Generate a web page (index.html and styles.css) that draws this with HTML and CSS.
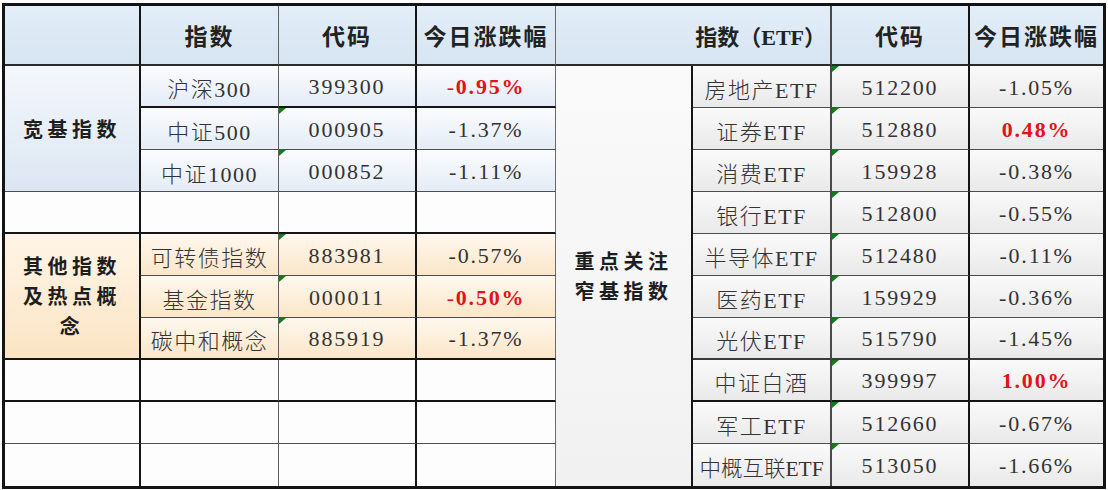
FILE: index.html
```html
<!DOCTYPE html>
<html lang="zh-CN">
<head>
<meta charset="utf-8">
<title>指数涨跌幅</title>
<link rel="stylesheet" href="styles.css">
</head>
<body>
<div class="sheet">
  <!-- header -->
  <div class="cell head k1 bh"></div>
  <div class="cell head k2 bh">指数</div>
  <div class="cell head k3 bh">代码</div>
  <div class="cell head k4 bh">今日涨跌幅</div>
  <div class="cell head k6 bh span2 right">指数（ETF）</div>
  <div class="cell head k7 bh">代码</div>
  <div class="cell head k8 bh">今日涨跌幅</div>

  <!-- row 1 -->
  <div class="cell label blue-l k1 bn rows3">宽基指数</div>
  <div class="cell blue k2 bt">沪深300</div>
  <div class="cell blue k3 bt num">399300</div>
  <div class="cell blue k4 bt num"><span class="red">-</span><b class="red">0.95%</b></div>
  <div class="cell label gray-l k5 b0 rows10">重点关注<br>窄基指数</div>
  <div class="cell gray k6 bn">房地产ETF</div>
  <div class="cell gray k7 bn num flag">512200</div>
  <div class="cell gray k8 bn num">-1.05%</div>

  <!-- row 2 -->
  <div class="cell blue k2 bn">中证500</div>
  <div class="cell blue k3 bn num flag">000905</div>
  <div class="cell blue k4 bn num">-1.37%</div>
  <div class="cell gray k6 bn">证券ETF</div>
  <div class="cell gray k7 bn num flag">512880</div>
  <div class="cell gray k8 bn num"><b class="red">0.48%</b></div>

  <!-- row 3 -->
  <div class="cell blue k2 bn">中证1000</div>
  <div class="cell blue k3 bn num flag">000852</div>
  <div class="cell blue k4 bn num">-1.11%</div>
  <div class="cell gray k6 bn">消费ETF</div>
  <div class="cell gray k7 bn num flag">159928</div>
  <div class="cell gray k8 bn num">-0.38%</div>

  <!-- row 4 -->
  <div class="cell white k1 bt"></div>
  <div class="cell white k2 bt"></div>
  <div class="cell white k3 bt"></div>
  <div class="cell white k4 bt"></div>
  <div class="cell gray k6 bn">银行ETF</div>
  <div class="cell gray k7 bn num flag">512800</div>
  <div class="cell gray k8 bn num">-0.55%</div>

  <!-- row 5 -->
  <div class="cell label orange-l k1 bt rows3">其他指数<br>及热点概<br>念</div>
  <div class="cell orange k2 bn">可转债指数</div>
  <div class="cell orange k3 bn num flag">883981</div>
  <div class="cell orange k4 bn num">-0.57%</div>
  <div class="cell gray k6 bn">半导体ETF</div>
  <div class="cell gray k7 bn num flag">512480</div>
  <div class="cell gray k8 bn num">-0.11%</div>

  <!-- row 6 -->
  <div class="cell orange k2 bn">基金指数</div>
  <div class="cell orange k3 bn num flag">000011</div>
  <div class="cell orange k4 bn num"><span class="red">-</span><b class="red">0.50%</b></div>
  <div class="cell gray k6 bn">医药ETF</div>
  <div class="cell gray k7 bn num flag">159929</div>
  <div class="cell gray k8 bn num">-0.36%</div>

  <!-- row 7 -->
  <div class="cell orange k2 bt">碳中和概念</div>
  <div class="cell orange k3 bt num flag">885919</div>
  <div class="cell orange k4 bt num">-1.37%</div>
  <div class="cell gray k6 bm">光伏ETF</div>
  <div class="cell gray k7 bm num flag">515790</div>
  <div class="cell gray k8 bm num">-1.45%</div>

  <!-- row 8 -->
  <div class="cell white k1 bt"></div>
  <div class="cell white k2 bt"></div>
  <div class="cell white k3 bt"></div>
  <div class="cell white k4 bt"></div>
  <div class="cell gray k6 bt">中证白酒</div>
  <div class="cell gray k7 bt num flag">399997</div>
  <div class="cell gray k8 bt num"><b class="red">1.00%</b></div>

  <!-- row 9 -->
  <div class="cell white k1 bn"></div>
  <div class="cell white k2 bn"></div>
  <div class="cell white k3 bn"></div>
  <div class="cell white k4 bn"></div>
  <div class="cell gray k6 bn">军工ETF</div>
  <div class="cell gray k7 bn num flag">512660</div>
  <div class="cell gray k8 bn num">-0.67%</div>

  <!-- row 10 -->
  <div class="cell white k1 b0"></div>
  <div class="cell white k2 b0"></div>
  <div class="cell white k3 b0"></div>
  <div class="cell white k4 b0"></div>
  <div class="cell gray k6 b0 tight">中概互联ETF</div>
  <div class="cell gray k7 b0 num flag">513050</div>
  <div class="cell gray k8 b0 num">-1.66%</div>
</div>
</body>
</html>
```

FILE: styles.css
```css
html, body {
  margin: 0;
  padding: 0;
  background: #ffffff;
}

.sheet {
  margin: 3px 0 0 2px;
  width: 1104px;
  box-sizing: border-box;
  border: 3px solid #141414;
  display: grid;
  grid-template-columns: 136px 138px 138px 139px 137px 139px 138px 133px;
  grid-template-rows: 60px repeat(10, 42px);
  font-family: "Liberation Serif", "Noto Sans CJK SC", serif;
  color: #333333;
}

.cell {
  box-sizing: border-box;
  position: relative;
  display: flex;
  align-items: center;
  justify-content: center;
  text-align: center;
  font-size: 22px;
  font-weight: 300;
  letter-spacing: 1.5px;
  white-space: nowrap;
  padding-top: 2px;
}

/* right borders per column */
.k1 { border-right: 2px solid #151515; }
.k2 { border-right: 1px solid #5f5f5f; }
.k3 { border-right: 2px solid #151515; }
.k4 { border-right: 1px solid #6a6a6a; }
.k5 { border-right: 2px solid #151515; }
.k6 { border-right: 2px solid #4a4a4a; }
.k7 { border-right: 2px solid #151515; }
.k8 { border-right: none; }

/* bottom borders */
.bh { border-bottom: 2px solid #2a2a2a; }
.bt { border-bottom: 2px solid #151515; }
.bm { border-bottom: 2px solid #3a3a3a; }
.bn { border-bottom: 1px solid #4e4e4e; }
.b0 { border-bottom: none; }

.span2 { grid-column: span 2; }
.rows3 { grid-row: span 3; }
.rows10 { grid-row: span 10; }

.head {
  background: linear-gradient(#e2edf7, #d7e5f2);
  font-weight: 700;
  font-size: 23px;
  letter-spacing: 2px;
  color: #222222;
  padding-top: 0;
}

.right {
  justify-content: flex-end;
  padding-right: 4px;
  font-size: 22px;
  letter-spacing: 0;
}

.label {
  font-weight: 700;
  font-size: 20px;
  letter-spacing: 4.5px;
  line-height: 30px;
  color: #1e1e1e;
  white-space: normal;
}

.blue { background: linear-gradient(#fbfcfe, #e4ecf6); }
.blue-l { background: linear-gradient(#f4f7fb, #dce6f2); }
.orange { background: linear-gradient(#fff8ee, #fbe6c9); }
.orange-l { background: linear-gradient(#fff5e6, #fbe4c4); }
.gray { background: linear-gradient(#fafafa, #e9e9e9); }
.gray-l { background: linear-gradient(#fafafa, #f1f1f1); }
.white { background: #fdfdfd; }

.num { letter-spacing: 1.8px; }

.tight { letter-spacing: 0; font-size: 21.5px; }

.red { color: #e3111b; }
b.red { font-weight: 700; }

.flag::before {
  content: "";
  position: absolute;
  top: 0;
  left: 0;
  width: 0;
  height: 0;
  border-top: 6px solid #157a1d;
  border-right: 7px solid transparent;
}
```
